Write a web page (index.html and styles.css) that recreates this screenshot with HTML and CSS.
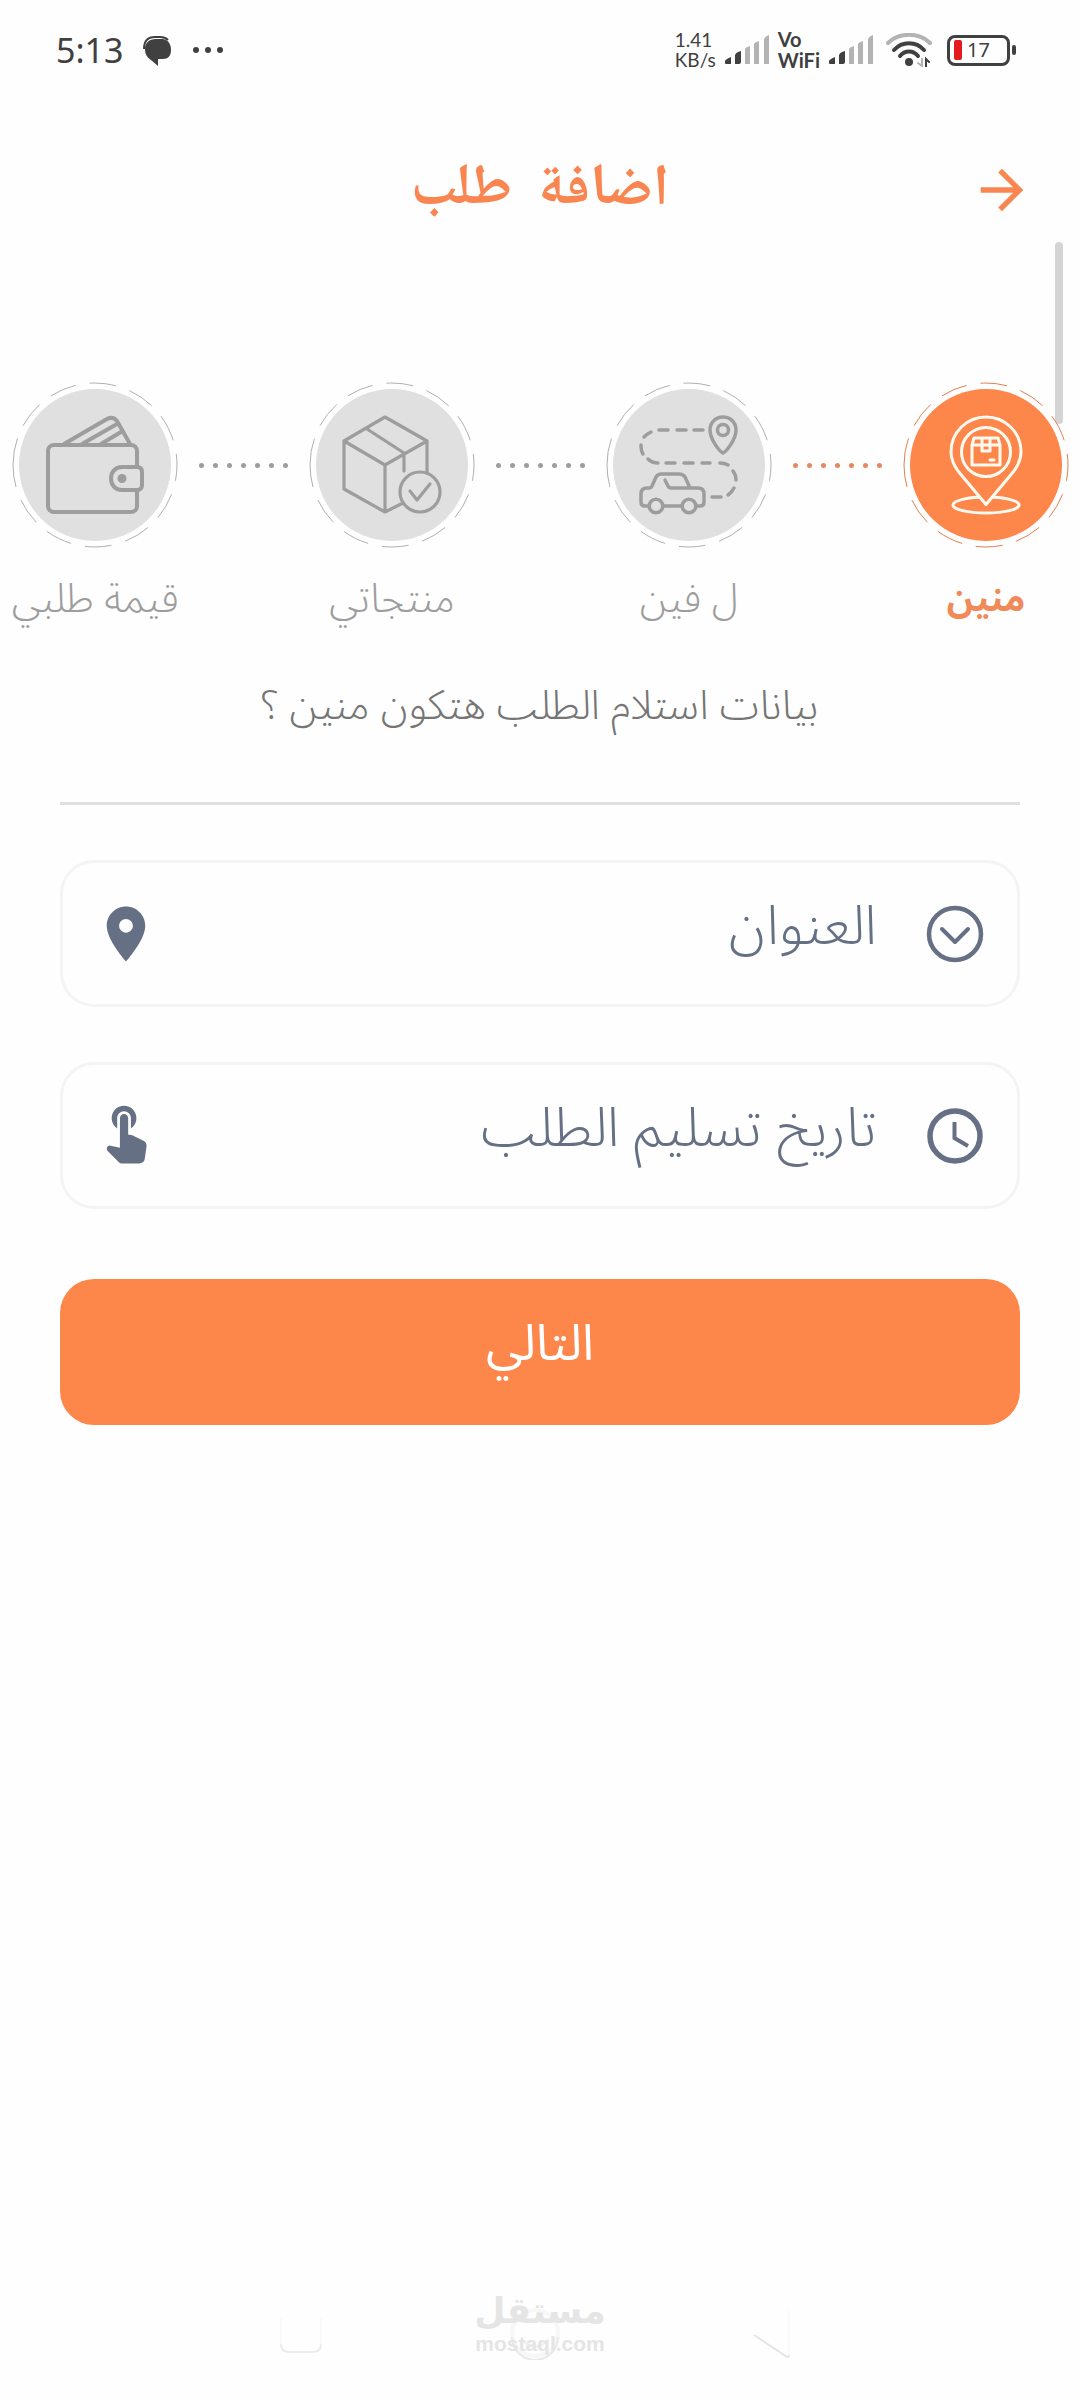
FILE: index.html
```html
<!DOCTYPE html>
<html lang="ar" dir="rtl">
<head>
<meta charset="utf-8">
<meta name="viewport" content="width=device-width, initial-scale=1">
<title>اضافة طلب</title>
<link rel="stylesheet" href="styles.css">
</head>
<body>
<div class="status" dir="ltr">
  <div class="status-group status-left">
    <span class="clock">5:13</span>
    <svg class="chat" viewBox="0 0 29 29" width="29" height="29">
      <path d="M1 12C1 4 5 0 12 0H17C21 0 23 1 25 3" fill="none" stroke="#404040" stroke-width="2"/>
      <path d="M2 12C2 6 6 2 13 2H19C25 2 28 7 28 13C28 19 25 22 20 22H15V29L8 23C5 21 2 18 2 12Z" fill="#404040"/>
    </svg>
    <svg viewBox="0 0 32 8" width="32" height="8" fill="#404040"><circle cx="4" cy="4" r="3"/><circle cx="16" cy="4" r="3"/><circle cx="28" cy="4" r="3"/></svg>
  </div>
  <div class="status-group status-right">
    <span class="rate"><span>1.41</span><span>KB/s</span></span>
    <svg viewBox="0 0 44 30" width="44" height="30"><path d="M0 26Q1 24 6 22V29H1Q0 29 0 28ZM10 20Q11 17 16 16V27Q16 29 14 29H10Z" fill="#404040"/><path d="M20 14Q21 12 25 11V29H20ZM29 9Q30 7 34 6V29H29ZM39 5Q39 2 44 0V29H39Z" fill="#b3b3b3"/></svg>
    <span class="carrier"><span>Vo</span><span>WiFi</span></span>
    <svg viewBox="0 0 44 30" width="44" height="30"><path d="M0 26Q1 24 6 22V29H1Q0 29 0 28ZM10 20Q11 17 16 16V27Q16 29 14 29H10Z" fill="#404040"/><path d="M20 14Q21 12 25 11V29H20ZM29 9Q30 7 34 6V29H29ZM39 5Q39 2 44 0V29H39Z" fill="#b3b3b3"/></svg>
    <svg class="wifi" viewBox="0 0 46 34" width="46" height="34" fill="none" stroke-linecap="round" stroke-width="4">
      <path d="M2 10C13-1 33-1 44 10" stroke="#b3b3b3"/>
      <path d="M8 17C16 8 30 8 38 17M14 23C19 17 27 17 32 23" stroke="#404040"/>
      <circle cx="23" cy="29" r="4" fill="#404040"/>
      <path d="M36 26V33L32 30" stroke="#b3b3b3" stroke-width="2"/><path d="M40 34V26L43 29" stroke="#404040" stroke-width="2"/>
    </svg>
    <span class="battery"><span class="battery-level"></span><span>17</span></span>
  </div>
</div>

<header class="appbar">
  <button class="back" type="button" aria-label="رجوع">
    <svg viewBox="0 0 24 24" width="64" height="64" fill="#f98650"><path d="M12 4l-1.410 1.410L16.170 11H4v2h12.170l-5.580 5.590L12 20l8-8z"/></svg>
  </button>
  <h1 class="title">اضافة&nbsp; طلب</h1>
</header>

<main class="page">
  <div class="scrollbar"></div>
  <ol class="steps">
    <li class="step step-active">
      <svg class="badge" viewBox="-83 -83 166 166" width="166" height="166">
        <circle class="halo" r="82"/><path class="ring" d="M-82 0A82 82 0 0 1 82 0A82 82 0 0 1 -82 0"/><circle class="disc" r="76"/>
        <g class="glyph" stroke-width="3">
          <ellipse cx="0" cy="40" rx="33" ry="8"/>
          <path class="cover" d="M0 39.500L-28 6C-33-1-35-7-35-13C-35-33-19-48 0-48S35-33 35-13C35-7 33-1 28 6Z"/>
          <circle cx="0" cy="-13" r="24.500"/>
          <path d="M-12-27H12L14-20V0H-14V-20ZM-14-20H14M-4-27V-14H4V-27M4-5H8"/>
        </g>
      </svg>
      <span class="step-label">منين</span>
    </li>
    <li class="dots dots-active" aria-hidden="true"><i></i><i></i><i></i><i></i><i></i><i></i><i></i></li>
    <li class="step">
      <svg class="badge" viewBox="-83 -83 166 166" width="166" height="166">
        <path class="ring" d="M-82 0A82 82 0 0 1 82 0A82 82 0 0 1 -82 0"/><circle class="disc" r="76"/>
        <g class="glyph" stroke-width="3.500">
          <path d="M34-12C30-14 21-26 21-35C21-43 27-48 34-48S47-43 47-35C47-26 38-14 34-12Z"/><circle cx="34" cy="-35" r="5.500"/>
          <path d="M14-35H5M-3-35H-12M-21-35H-30M-38-33Q-42-31-45-28M-48-20Q-48-14-46-11M-41-6Q-37-2-31-2M-23-2H-14M-5-2H4M13-2H21M31-2Q36-2 39 0M44 6Q47 10 47 15M45 23Q43 27 39 30M32 32H23"/>
          <path d="M-40 41H-44Q-48 41-48 37V29Q-48 23-42 23H-40Q-38 23-37 21L-33 12Q-31 9-28 9H-10Q-6 9-4 12L1 23M-24 15L-21 21Q-20 23-18 23H9Q15 23 15 29V37Q15 41 11 41H7M-26 41H-7"/>
          <circle cx="-33" cy="41" r="6.800"/><circle cx="0" cy="41" r="6.800"/>
        </g>
      </svg>
      <span class="step-label">ل فين</span>
    </li>
    <li class="dots" aria-hidden="true"><i></i><i></i><i></i><i></i><i></i><i></i><i></i></li>
    <li class="step">
      <svg class="badge" viewBox="-83 -83 166 166" width="166" height="166">
        <path class="ring" d="M-82 0A82 82 0 0 1 82 0A82 82 0 0 1 -82 0"/><circle class="disc" r="76"/>
        <g class="glyph" stroke-width="3.200">
          <path d="M35 8V-24L-7-48L-48-24V24L-7 47L11 38M-48-24L-7 0L35-24M-7 0V47M-25-36L12-12V6"/>
          <circle cx="28" cy="27" r="20"/><path d="M18 26L25 35L38 19"/>
        </g>
      </svg>
      <span class="step-label">منتجاتي</span>
    </li>
    <li class="dots" aria-hidden="true"><i></i><i></i><i></i><i></i><i></i><i></i><i></i></li>
    <li class="step">
      <svg class="badge" viewBox="-83 -83 166 166" width="166" height="166">
        <path class="ring" d="M-82 0A82 82 0 0 1 82 0A82 82 0 0 1 -82 0"/><circle class="disc" r="76"/>
        <g class="glyph" stroke-width="4">
          <path d="M-31-21L12-46Q18-49 22-44L35-21M-13-21L22-41M6-21L26-33"/>
          <rect x="-47" y="-20" width="89" height="67" rx="6"/>
          <path class="cover" d="M27 2H42Q47 2 47 7V20Q47 25 42 25H27C20 25 16 20 16 13.500S20 2 27 2Z"/>
          <circle class="pip" cx="27" cy="13.500" r="4.500"/>
        </g>
      </svg>
      <span class="step-label">قيمة طلبي</span>
    </li>
  </ol>

  <form class="form">
    <p class="question">بيانات استلام الطلب هتكون منين ؟</p>
    <hr class="divider">
    <div class="field">
      <svg viewBox="0 0 64 64" width="64" height="64" fill="none" stroke="#667085" stroke-linecap="round" stroke-linejoin="round"><circle cx="32" cy="32" r="26" stroke-width="4.500"/><path d="M19 27L32 40L45 27" stroke-width="4"/></svg>
      <select class="control" aria-label="العنوان"><option>العنوان</option></select>
      <svg viewBox="0 0 24 24" width="66" height="66" fill="#667085"><path d="M12 2C8.130 2 5 5.130 5 9c0 5.250 7 13 7 13s7-7.750 7-13c0-3.870-3.130-7-7-7zm0 9.500c-1.380 0-2.500-1.120-2.500-2.500s1.120-2.500 2.500-2.500 2.500 1.120 2.500 2.500-1.120 2.500-2.500 2.500z"/></svg>
    </div>
    <div class="field">
      <svg viewBox="0 0 64 64" width="64" height="64" fill="none" stroke="#667085"><circle cx="32" cy="32" r="25" stroke-width="5.500"/><path d="M31.500 18V34L45 42" stroke-width="4"/></svg>
      <input class="control" type="text" placeholder="تاريخ تسليم الطلب" aria-label="تاريخ تسليم الطلب">
      <svg viewBox="0 0 24 24" width="66" height="66" fill="#667085"><path d="M8.790 9.240V5.500c0-1.380 1.120-2.500 2.500-2.500s2.500 1.120 2.500 2.500v3.740c1.210-.81 2-2.180 2-3.740 0-2.490-2.010-4.500-4.500-4.500s-4.500 2.010-4.500 4.500c0 1.560.79 2.930 2 3.740zm5.500 2.470c-.28-.14-.58-.21-.89-.21h-.61v-6c0-.83-.67-1.500-1.500-1.500s-1.500.67-1.500 1.500v10.740l-3.440-.72c-.37-.08-.76.04-1.030.31-.43.44-.43 1.140 0 1.580l4.010 4.010c.38.370.89.580 1.420.580h6.100c1 0 1.840-.73 1.980-1.720l.63-4.460c.12-.85-.32-1.680-1.090-2.070l-4.080-2.040z"/></svg>
    </div>
    <button class="next" type="button">التالي</button>
  </form>
</main>

<footer class="navbar">
  <svg viewBox="0 0 54 54" width="54" height="54" fill="none"><path d="M12 29L45 51Q47 51 47 49" stroke="#e4e4e4" stroke-width="2"/><path d="M47 4V49" stroke="#fafafa" stroke-width="2"/></svg>
  <svg viewBox="0 0 54 54" width="54" height="54" fill="none"><circle cx="27" cy="27" r="23" stroke="#f7f7f7" stroke-width="4"/><path d="M4 31A23 23 0 0 0 50 31" stroke="#e9e9e9" stroke-width="2"/><path d="M14 34Q27 48 40 34" stroke="#f0f0f0" stroke-width="2"/></svg>
  <svg viewBox="0 0 54 54" width="54" height="54" fill="none"><path d="M7 12V38M47 12V38" stroke="#fafafa" stroke-width="2"/><path d="M7 38Q7 46 15 46H39Q47 46 47 38" stroke="#ececec" stroke-width="2"/></svg>
  <div class="watermark"><span class="mark-ar">مستقل</span><span class="mark-en" dir="ltr">mostaql.com</span></div>
</footer>
</body>
</html>
```
FILE: styles.css
```css
* { box-sizing: border-box; }
body {
  margin: 0;
  min-height: 100vh;
  display: flex;
  flex-direction: column;
  background: #fefefe;
  font-family: "Noto Sans Arabic", "DejaVu Sans", sans-serif;
  font-weight: 300;
}
svg { display: block; flex: none; }

.status {
  height: 100px;
  padding: 0 70px 0 56px;
  display: flex;
  align-items: center;
  justify-content: space-between;
  color: #404040;
  font-family: "Noto Sans", sans-serif;
  font-weight: 400;
}
.status-group { display: flex; align-items: center; }
.status-left { gap: 20px; }
.status-right { gap: 9px; }
.clock { font-size: 34px; line-height: 40px; }
.chat { margin-top: 2px; overflow: visible; }
.rate, .carrier { display: flex; flex-direction: column; }
.rate { font-family: Lato, sans-serif; font-size: 19px; line-height: 20px; }
.carrier { font-family: Lato, sans-serif; font-size: 20px; line-height: 21px; font-weight: 700; }
.wifi { margin-left: 4px; }
.battery {
  position: relative;
  width: 63px;
  height: 31px;
  margin-left: 6px;
  padding: 0 4px;
  display: flex;
  align-items: center;
  gap: 5px;
  border: 3px solid #404040;
  border-radius: 8px;
  font-size: 20px;
  line-height: 20px;
}
.battery::after {
  content: "";
  position: absolute;
  right: -9px;
  top: 7px;
  width: 4px;
  height: 10px;
  border-radius: 2px;
  background: #404040;
}
.battery-level { width: 8px; height: 20px; border-radius: 2px; background: #e31b1f; }

.appbar {
  height: 142px;
  padding: 38px 46px 0;
  display: grid;
  grid-template-columns: 64px 1fr 64px;
}
.back { padding: 0; border: 0; background: none; height: 104px; cursor: pointer; }
.title {
  margin: 0;
  text-align: center;
  color: #f98650;
  font-family: "Noto Naskh Arabic", "Noto Sans Arabic", "DejaVu Sans", serif;
  font-size: 58px;
  line-height: 108px;
  font-weight: 700;
}

.page { position: relative; padding-top: 140px; }
.scrollbar {
  position: absolute;
  top: 0;
  right: 17px;
  width: 8px;
  height: 182px;
  border-radius: 4px;
  background: #d4d4d4;
}
.steps {
  position: relative;
  margin: 0;
  padding: 0 11px 0 12px;
  display: flex;
  justify-content: space-between;
  list-style: none;
}
.step { width: 166px; display: flex; flex-direction: column; align-items: center; color: #9d9d9d; }
.step-label { margin-top: 24px; font-size: 40px; line-height: 56px; white-space: nowrap; }
.ring { fill: none; stroke: #b0b0b0; stroke-width: 1; stroke-dasharray: 27 14; }
.halo { fill: #fefefe; }
.disc { fill: #e0e0e0; }
.glyph { fill: none; stroke: #9d9d9d; stroke-linecap: round; stroke-linejoin: round; }
.cover { fill: #e0e0e0; }
.pip { fill: #9d9d9d; stroke: none; }
.step-active { color: #f08a58; font-weight: 700; }
.step-active .step-label { font-size: 36px; }
.step-active .ring { stroke: #e08050; }
.step-active .disc, .step-active .cover { fill: #fd864a; }
.step-active .glyph { stroke: #fffaf0; }
.dots { height: 166px; display: flex; align-items: center; gap: 9px; color: #9d9d9d; }
.dots i { width: 5px; height: 5px; border-radius: 50%; background: currentColor; }
.dots-active { color: #e58a60; }

.form { padding: 0 60px; display: flex; flex-direction: column; }
.question {
  margin: 50px 0 0;
  text-align: center;
  color: #757575;
  font-size: 41px;
  line-height: 56px;
}
.divider { width: 100%; height: 3px; margin: 68px 0 0; border: 0; background: #e0e0e0; }
.field {
  height: 147px;
  margin-top: 55px;
  padding: 0 30px;
  display: flex;
  align-items: center;
  border: 3px solid #f3f4f6;
  border-radius: 34px;
}
.control {
  flex: 1;
  min-width: 0;
  margin: 0 0 14px;
  padding: 0 46px;
  border: 0;
  outline: 0;
  background: none;
  appearance: none;
  color: #667085;
  font-family: inherit;
  font-weight: 300;
  font-size: 55px;
}
.control::placeholder { color: #667085; opacity: 1; }
.next {
  height: 146px;
  margin-top: 70px;
  padding: 0 0 16px;
  border: 0;
  border-radius: 34px;
  background: #fd864a;
  color: #fff;
  font-family: inherit;
  font-size: 50px;
  cursor: pointer;
}

.navbar {
  position: relative;
  margin-top: auto;
  height: 110px;
  padding: 16px 10px 0 0;
  display: flex;
  justify-content: center;
  gap: 180px;
}
.watermark {
  position: absolute;
  inset: 0;
  display: flex;
  flex-direction: column;
  align-items: center;
  color: #e5e5e5;
  font-weight: 700;
}
.mark-ar { font-family: "DejaVu Sans", sans-serif; font-size: 36px; line-height: 42px; }
.mark-en { font-family: "Liberation Sans", sans-serif; font-size: 21px; line-height: 24px; }
```
